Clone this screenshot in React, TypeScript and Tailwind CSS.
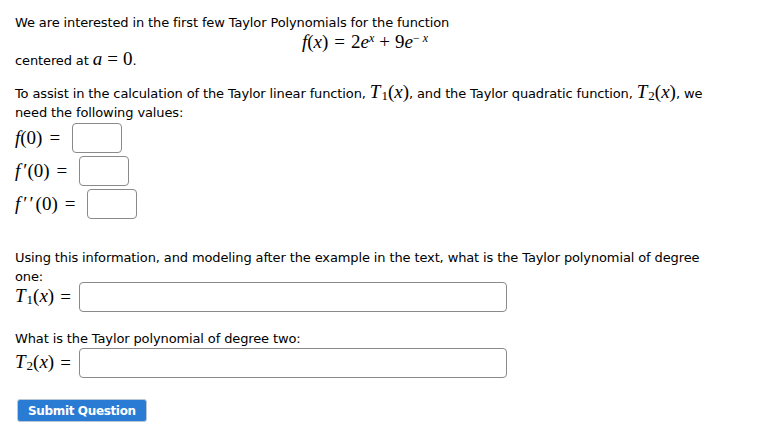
import React from 'react';

const body = "font-['DejaVu_Sans',sans-serif] text-[13px] tracking-[-0.12px] leading-[19px] text-black";
const math = "font-['Liberation_Serif',serif] text-[19px] tracking-normal leading-[0]";

function Box({ wide }: { wide?: boolean }) {
  return (
    <span
      className={`inline-block align-middle border border-[#8a8a8a] rounded-[4px] bg-white h-[30px] ${
        wide ? 'w-[428px]' : 'w-[50px]'
      }`}
    />
  );
}

function T({ n }: { n: number }) {
  return (
    <span className={math}>
      <i>T</i>
      <sub className="text-[13px] -bottom-[2px] ml-[1px]">{n}</sub>(<i>x</i>)
    </span>
  );
}

export default function App() {
  return (
    <div className={`${body} w-[781px] h-[441px] bg-white pl-[15px] pt-[13px]`}>
      <div className="w-[705px]">
        <p>We are interested in the first few Taylor Polynomials for the function</p>
        <div className={`${math} text-[18px] text-center leading-[19px] pr-[5px]`}>
          <i>f</i>(<i>x</i>)<span className="mx-[6px]">=</span>2<i>e</i>
          <sup className="text-[12px] -top-[6px]">
            <i>x</i>
          </sup>
          <span className="mx-[5px]">+</span>9<i>e</i>
          <sup className="text-[12px] -top-[6px]">
            −<span className="ml-[3px]"><i>x</i></span>
          </sup>
        </div>
        <p>
          centered at{' '}
          <span className={`${math} text-[18px]`}>
            <i>a</i>
            <span className="mx-[5px]">=</span>0
          </span>
          .
        </p>

        <p className="mt-[14px]">
          To assist in the calculation of the Taylor linear function, <T n={1} />, and the Taylor quadratic
          function, <T n={2} />, we need the following values:
        </p>

        <div className="flex flex-col gap-[3px] mt-[1px]">
          <div className="flex items-center gap-[12px]">
            <span className={math}>
              <i>f</i>(0)<span className="ml-[7px]">=</span>
            </span>
            <Box />
          </div>
          <div className="flex items-center gap-[12px]">
            <span className={math}>
              <i>f</i>
              <span className="ml-[3px]">′</span>(0)<span className="ml-[7px]">=</span>
            </span>
            <Box />
          </div>
          <div className="flex items-center gap-[12px]">
            <span className={math}>
              <i>f</i>
              <span className="ml-[3px] tracking-[2px]">′′</span>(0)<span className="ml-[7px]">=</span>
            </span>
            <Box />
          </div>
        </div>

        <p className="mt-[29px]">
          Using this information, and modeling after the example in the text, what is the Taylor polynomial of degree
          one:
        </p>
        <div className="flex items-center -mt-[4px]">
          <T n={1} />
          <span className={`${math} ml-[6px] mr-[8px]`}>=</span>
          <Box wide />
        </div>

        <p className="mt-[17px]">What is the Taylor polynomial of degree two:</p>
        <div className="flex items-center mt-[0px]">
          <T n={2} />
          <span className={`${math} ml-[6px] mr-[8px]`}>=</span>
          <Box wide />
        </div>

        <button className="mt-[21px] ml-[2px] h-[23px] px-[10px] bg-[#2a7bd4] border border-[#b9c7d6] rounded-[3px] text-white font-bold text-[12px] tracking-[-0.35px] leading-none">
          Submit Question
        </button>
      </div>
    </div>
  );
}
